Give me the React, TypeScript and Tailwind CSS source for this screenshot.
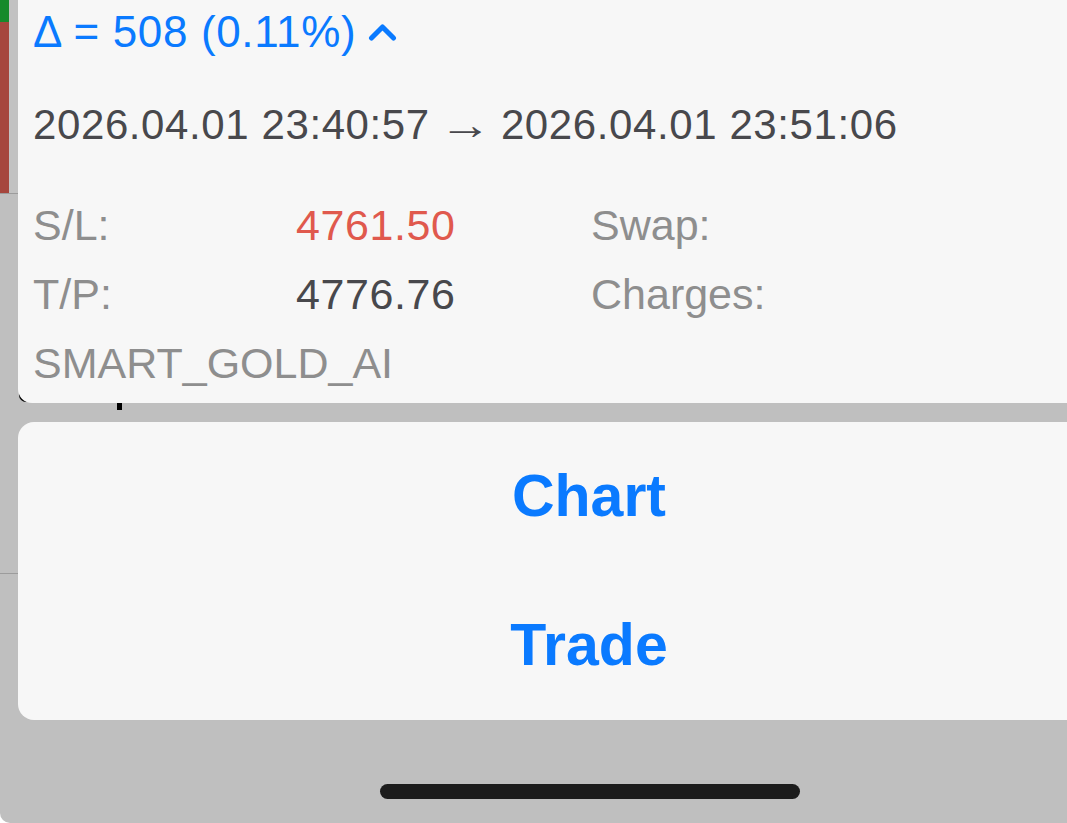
const font = { fontFamily: '"Liberation Sans", Arial, sans-serif' };

const rows = [
  { label: 'S/L:', value: '4761.50', valueColor: 'text-[#e0594d]', side: 'Swap:' },
  { label: 'T/P:', value: '4776.76', valueColor: 'text-[#48484c]', side: 'Charges:' },
];

const App = () => {
  return (
    <div className="w-[1067px] h-[823px] bg-white overflow-hidden" style={font}>
      <div className="flex h-full bg-[#bfbfbf] rounded-bl-[10px]">
        {/* left rail: list behind the sheet */}
        <div className="w-[18px] shrink-0 flex flex-col">
          <div className="flex h-[193px]">
            <div className="w-[9px] flex flex-col">
              <div className="h-[22px] bg-[#168a2b]"></div>
              <div className="flex-1 bg-[#a6463d]"></div>
            </div>
            <div className="flex-1 bg-[#c2c2c2]"></div>
          </div>
          <div className="h-px bg-[#9c9c9c]"></div>
          <div className="h-[379px]"></div>
          <div className="h-px bg-[#9c9c9c]"></div>
        </div>

        <div className="relative w-[1142px] shrink-0 flex flex-col">
          {/* bits of the list peeking out behind the card */}
          <div className="absolute left-[1px] top-[380px] w-[40px] h-[22px] bg-black rounded-bl-[7px]"></div>
          <div className="absolute left-[99px] top-[400px] w-[5px] h-[10px] bg-black"></div>

          {/* details card */}
          <div className="relative bg-[#f7f7f7] rounded-bl-[14px] pl-[15px] pt-[2px] pb-[5px]">
            <div className="flex items-center h-[60px] leading-[60px] text-[44px] text-[#0a7aff] tracking-[0.65px]">
              <span>Δ = 508 (0.11%)</span>
              <svg className="ml-[12px]" width="30" height="20" viewBox="0 0 30 20" fill="none" stroke="currentColor" strokeWidth="5" strokeLinecap="round" strokeLinejoin="round">
                <polyline points="3.5,16 14.5,5 25.5,16" />
              </svg>
            </div>
            <div className="mt-[33px] h-[60px] leading-[60px] text-[42px] text-[#48484c] tracking-[0.6px] whitespace-nowrap">
              2026.04.01 23:40:57 <span className="inline-block scale-x-125 mx-[2px]">→</span> 2026.04.01 23:51:06
            </div>
            <div className="mt-[36px] grid grid-cols-[263px_295px_1fr] text-[43px] leading-[69px]">
              {rows.map((r) => (
                <div key={r.label} className="contents">
                  <div className="text-[#8e8e8e]">{r.label}</div>
                  <div className={`${r.valueColor} tracking-[0.6px]`}>{r.value}</div>
                  <div className="text-[#8e8e8e]">{r.side}</div>
                </div>
              ))}
              <div className="col-span-3 text-[#8e8e8e]">SMART_GOLD_AI</div>
            </div>
          </div>

          {/* action sheet */}
          <div className="mt-[19px] bg-[#f7f7f7] rounded-l-[16px] flex flex-col">
            <button className="h-[149px] leading-[149px] text-[59px] font-bold text-[#0a7aff] text-center">Chart</button>
            <button className="h-[149px] leading-[149px] text-[59px] font-bold text-[#0a7aff] text-center">Trade</button>
          </div>

          {/* home indicator */}
          <div className="mt-[64px] ml-[362px] w-[420px] h-[15px] rounded-full bg-[#1c1c1c]"></div>
        </div>
      </div>
    </div>
  );
};

export default App;
